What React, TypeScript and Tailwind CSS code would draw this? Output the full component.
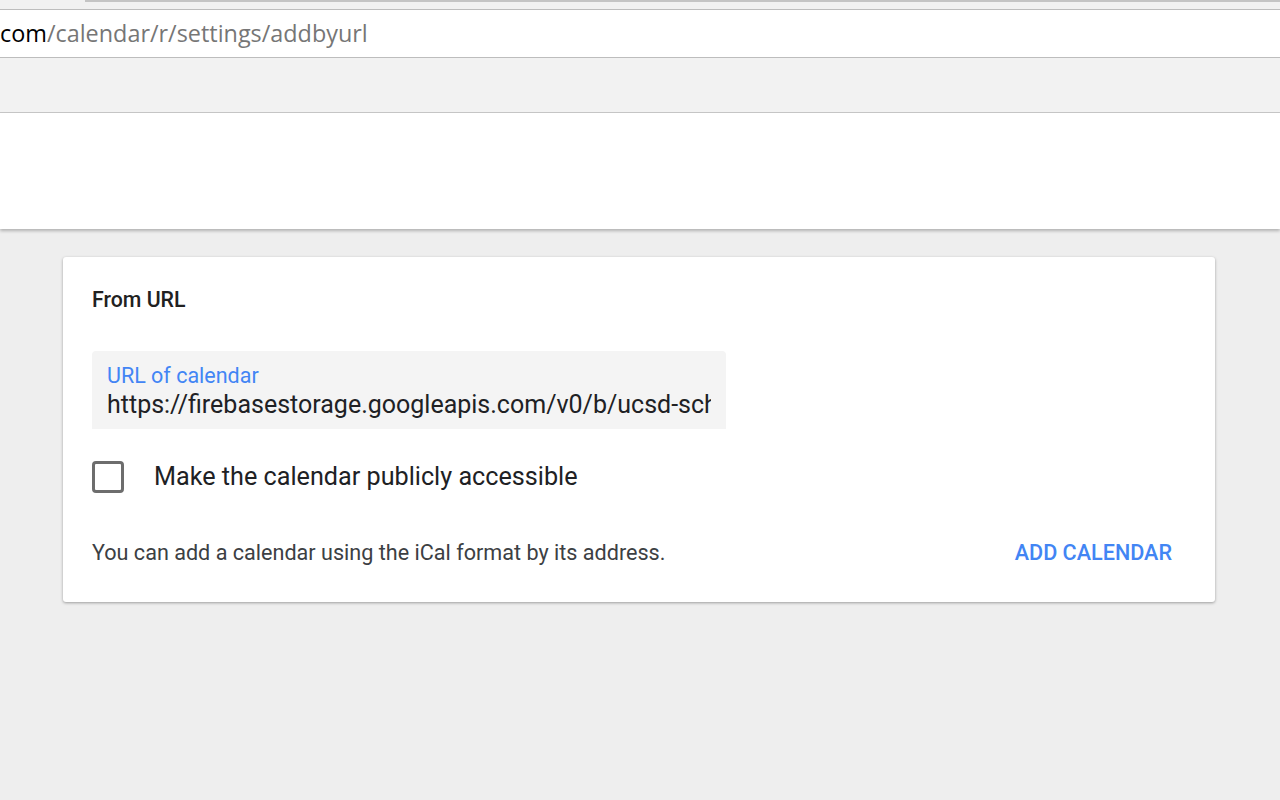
export default function App() {
  return (
    <div className="flex min-h-screen flex-col bg-[#eeeeee] font-['Roboto',sans-serif]">
      {/* browser chrome */}
      <div className="h-[10px] border-b border-[#bdbdbd] bg-[#f1f1f1] pl-[85px]">
        <div className="h-[2px] bg-[#c4c4c4]" />
      </div>
      <div className="flex h-[48px] items-center overflow-hidden whitespace-nowrap border-b border-[#bdbdbd] bg-white font-['Open_Sans',sans-serif] text-[23.4px]">
        <span className="text-black">com</span>
        <span className="text-[#767676]">/calendar/r/settings/addbyurl</span>
      </div>
      <div className="h-[55px] border-b border-[#c8c8c8] bg-[#f2f2f2]" />
      <div className="h-[116px] bg-white shadow-[0_2px_3px_rgba(0,0,0,0.25)]" />

      {/* page */}
      <div className="px-[63px] pt-[28px]">
        <div className="w-[1152px] rounded-[3px] bg-white px-[29px] pb-[35px] pt-[29px] shadow-[0_1px_3px_rgba(0,0,0,0.35)]">
          <div className="text-[21.3px] font-medium leading-[28px] text-[#212121]">From URL</div>

          <label className="mt-[37px] block w-[634px] rounded-t-[4px] bg-[#f4f4f4] pb-[8px] pl-[15px] pt-[12px]">
            <div className="text-[21.5px] leading-[26px] text-[#4285f4]">URL of calendar</div>
            <input
              readOnly
              value="https://firebasestorage.googleapis.com/v0/b/ucsd-schedule"
              className="block h-[32px] w-[604px] bg-transparent p-0 text-[25px] leading-[32px] text-[#202124] outline-none"
            />
          </label>

          <div className="mt-[32px] flex items-center">
            <div className="h-[32px] w-[32px] rounded-[4px] border-[3px] border-[#6d6d6d]" />
            <span className="ml-[30px] text-[25.2px] leading-[32px] text-[#202124]">
              Make the calendar publicly accessible
            </span>
          </div>

          <div className="mt-[46px] flex items-center justify-between pr-[14px]">
            <span className="text-[21.6px] leading-[28px] text-[#3c4043]">
              You can add a calendar using the iCal format by its address.
            </span>
            <button className="text-[21.6px] font-medium uppercase leading-[28px] text-[#4285f4]">
              Add calendar
            </button>
          </div>
        </div>
      </div>
    </div>
  )
}
